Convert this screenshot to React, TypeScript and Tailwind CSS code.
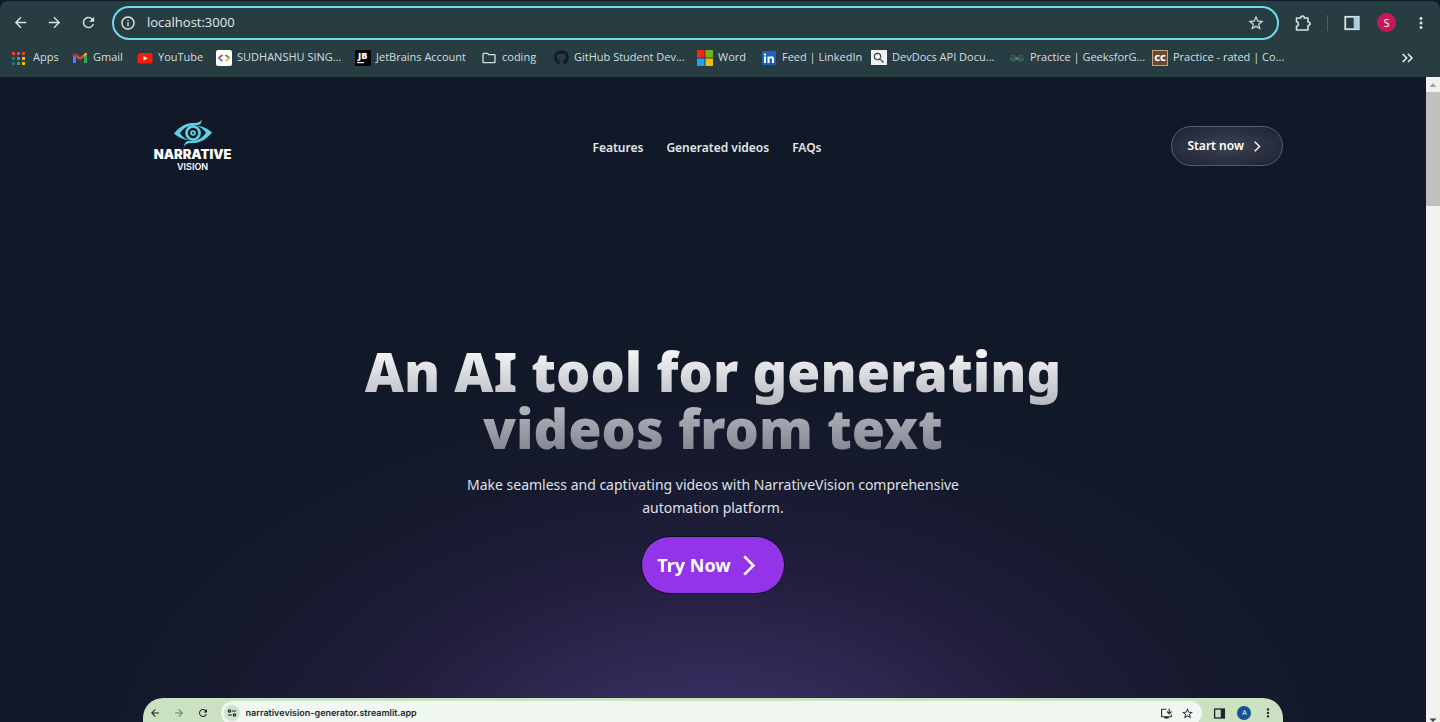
import type { ReactNode } from 'react';
import { FaGithub } from 'react-icons/fa';
import {
  MdArrowBack,
  MdArrowForward,
  MdInfoOutline,
  MdInstallDesktop,
  MdMoreVert,
  MdOutlineFolder,
  MdRefresh,
  MdSearch,
  MdStarBorder,
} from 'react-icons/md';

const AppsIcon = () => {
  const colors = ['#ea4335', '#ea4335', '#ea4335', '#34707a', '#4285f4', '#fbbc04', '#34707a', '#34a853', '#fbbc04'];
  return (
    <svg width="16" height="16" viewBox="0 0 16 16">
      {colors.map((c, i) => (
        <rect key={i} x={(i % 3) * 5} y={2 + Math.floor(i / 3) * 5} width="3" height="3" fill={c} />
      ))}
    </svg>
  );
};

const GmailIcon = () => (
  <svg width="16" height="16" viewBox="0 0 16 16">
    <path d="M1 13V4.500L4 7v6z" fill="#4285f4" />
    <path d="M12 13V7l3-2.500V13z" fill="#34a853" />
    <path d="M12 4l1.500-1C14.500 2.500 15 3.500 15 4.500L12 7z" fill="#fbbc04" />
    <path d="M4 4L2.500 3C1.500 2.500 1 3.500 1 4.500L4 7z" fill="#c5221f" />
    <path d="M4 4l4 3 4-3v3l-4 3-4-3z" fill="#ea4335" />
  </svg>
);

const YoutubeIcon = () => (
  <svg width="16" height="16" viewBox="0 0 16 16">
    <rect x="0.500" y="3" width="15" height="10.500" rx="2.500" fill="#f61c0d" />
    <path d="M6.500 6v4.500l4-2.250z" fill="#fff" />
  </svg>
);

const CodeIcon = () => (
  <svg width="16" height="16" viewBox="0 0 16 16">
    <rect width="16" height="16" rx="2" fill="#fff" />
    <g fill="none" strokeWidth="2">
      <path d="M6.500 5L2.500 8" stroke="#ea4335" />
      <path d="M2.500 8l4 3" stroke="#4285f4" />
      <path d="M9.500 5l4 3" stroke="#34a853" />
      <path d="M13.500 8l-4 3" stroke="#fbbc04" />
    </g>
  </svg>
);

const JetBrainsIcon = () => (
  <svg width="16" height="16" viewBox="0 0 16 16" className="overflow-visible">
    <rect width="16" height="16" fill="#05060c" />
    <text x="3" y="9" fontSize="9" fontWeight="800" fill="#fff">JB</text>
    <rect x="2" y="12" width="7" height="1.200" fill="#fff" />
  </svg>
);

const WindowsIcon = () => (
  <svg width="16" height="16" viewBox="0 0 16 16">
    <rect width="7.500" height="7.500" fill="#f8250f" />
    <rect x="8.500" width="7.500" height="7.500" fill="#72b51c" />
    <rect y="8.500" width="7.500" height="7.500" fill="#21a1f1" />
    <rect x="8.500" y="8.500" width="7.500" height="7.500" fill="#fab908" />
  </svg>
);

const LinkedinIcon = () => (
  <svg width="16" height="16" viewBox="0 0 16 16">
    <rect x="1" y="1" width="14" height="14" rx="1" fill="#1c62b8" />
    <path d="M3 6.500h2V13H3zM3 3.500h2v2H3zM6.500 6.500h2v1c1-1.700 4.500-1.700 4.500 1.500v4h-2V9.500c0-1.700-2.500-1.700-2.500 0V13h-2z" fill="#fff" />
  </svg>
);

const DevDocsIcon = () => (
  <span className="flex h-[15px] w-4 items-center justify-center bg-[#f1f1f1] text-[#3c4043]">
    <MdSearch size={14} />
  </span>
);

const GeeksIcon = () => (
  <svg width="16" height="16" viewBox="0 0 16 16" fill="none" stroke="#3f6560" strokeWidth="1.300">
    <path d="M2 6.200c2-1.200 5-.4 5 2.300 0 3-5.500 3-5.500 0h13c0 3-5.500 3-5.500 0 0-2.700 3-3.500 5-2.300" />
    <path d="M7 8.500h2" stroke="#4f9b2c" strokeWidth="2" />
  </svg>
);

const CodeChefIcon = () => (
  <span className="flex h-4 w-4 items-center justify-center border border-[#c9a27e] bg-[#6b4a35] text-[9px] leading-none font-extrabold text-white">
    CC
  </span>
);

const ExtensionIcon = () => (
  <svg width="18" height="18" viewBox="0 0 18 18" fill="none" stroke="currentColor" strokeWidth="1.600">
    <path d="M2.500 4h4.200c0-2.600 3.600-2.600 3.600 0h3.700v4c2.700.2 2.700 3.400 0 3.600V16H2.500v-3.700c2.600-.4 2.600-4.200 0-4.600z" strokeLinejoin="round" />
  </svg>
);

// icon, label and column width of every entry of the bookmarks bar
const bookmarks: { label: string; icon: ReactNode; width: string }[] = [
  { label: 'Apps', icon: <AppsIcon />, width: 'w-[60px]' },
  { label: 'Gmail', icon: <GmailIcon />, width: 'w-[65px]' },
  { label: 'YouTube', icon: <YoutubeIcon />, width: 'w-[79px]' },
  { label: 'SUDHANSHU SING...', icon: <CodeIcon />, width: 'w-[139px]' },
  { label: 'JetBrains Account', icon: <JetBrainsIcon />, width: 'w-[126px]' },
  { label: 'coding', icon: <MdOutlineFolder size={18} />, width: 'w-[72px]' },
  { label: 'GitHub Student Dev...', icon: <FaGithub size={15} color="#0f1a2a" />, width: 'w-[144px]' },
  { label: 'Word', icon: <WindowsIcon />, width: 'w-[64px]' },
  { label: 'Feed | LinkedIn', icon: <LinkedinIcon />, width: 'w-[110px]' },
  { label: 'DevDocs API Docu...', icon: <DevDocsIcon />, width: 'w-[138px]' },
  { label: 'Practice | GeeksforG...', icon: <GeeksIcon />, width: 'w-[143px]' },
  { label: 'Practice - rated | Co...', icon: <CodeChefIcon />, width: 'w-[140px]' },
];

const PanelIcon = ({ size, fill }: { size: number; fill: string }) => (
  <svg width={size} height={size} viewBox="0 0 16 16">
    <rect x="2" y="2.500" width="12" height="11" fill="none" stroke="currentColor" strokeWidth="1.600" />
    <rect x="9.500" y="2.500" width="4.500" height="11" fill={fill} />
  </svg>
);

const BrowserBar = () => (
  <header className="bg-[#0b1c28] font-['Open_Sans',sans-serif]">
    <div className="mt-px rounded-t-lg bg-[#283d42] text-[#d5e3e8]">
      <div className="flex h-[43px] items-center pr-[10px] pl-3">
        <button aria-label="Back" className="flex w-[34px]"><MdArrowBack size={17} /></button>
        <button aria-label="Forward" className="flex w-[34px]"><MdArrowForward size={17} /></button>
        <button aria-label="Reload" className="flex w-8"><MdRefresh size={17} /></button>
        <div className="flex h-[34px] flex-1 items-center gap-[11px] rounded-full border-2 border-[#70dbed] px-1.5">
          <MdInfoOutline size={16} className="text-[#e8eef0]" />
          <input
            aria-label="Address"
            defaultValue="localhost:3000"
            className="min-w-0 flex-1 bg-transparent text-[13px] text-[#e3e8ea] outline-none"
          />
          <button aria-label="Bookmark this page" className="pr-1.5"><MdStarBorder size={18} /></button>
        </div>
        <div className="flex items-center pl-[15px]">
          <button aria-label="Extensions"><ExtensionIcon /></button>
          <span className="mx-[15px] h-4 w-px bg-[#466069]" />
          <button aria-label="Side panel"><PanelIcon size={18} fill="#a8cfdc" /></button>
          <button aria-label="Profile" className="ml-4 h-[19px] w-[19px] rounded-full bg-[#c41a56] text-[11px] leading-none text-white">
            S
          </button>
          <button aria-label="Menu" className="ml-4"><MdMoreVert size={18} /></button>
        </div>
      </div>
      <nav className="flex h-[33px] items-center pr-6 pb-1.5 pl-3 text-[11px] text-[#d3dde0]">
        {bookmarks.map((b) => (
          <a key={b.label} href="#" className={`flex shrink-0 items-center gap-[5px] whitespace-nowrap ${b.width}`}>
            <span className="flex w-4 shrink-0 justify-center">{b.icon}</span>
            {b.label}
          </a>
        ))}
        <button aria-label="More bookmarks" className="ml-auto">
          <svg width="16" height="16" viewBox="0 0 12 12" fill="none" stroke="#e3eef2" strokeWidth="1.200">
            <path d="M2 3l3 3-3 3M6 3l3 3-3 3" />
          </svg>
        </button>
      </nav>
    </div>
  </header>
);

const Logo = () => (
  <a href="#" className="flex w-[100px] flex-col items-center font-['Inter',sans-serif] text-white">
    <svg width="44" height="28" viewBox="0 0 44 30" fill="none">
      <g fill="#5fd0e0">
        <path d="M1.500 15.500C9 6.500 16 4 23 4.200c4 0 7-.7 8.500-4-.2 4-1.500 6-5.500 6.500-4-1-12 0-18 8.500 3 4 6 6 9.500 7.500C11 22 6 19.500 1.500 15.500z" />
        <path d="M42.500 14.500C35 23.500 28 26 21 25.800c-4 0-7 .7-8.500 4 .2-4 1.500-6 5.500-6.500 4 1 12 0 18-8.500-3-4-6-6-9.500-7.500C33 8 38 10.500 42.500 14.500z" />
      </g>
      <circle cx="22" cy="15" r="7" stroke="#5fd0e0" strokeWidth="3" />
      <circle cx="22" cy="15" r="3" fill="#5fd0e0" />
      <circle cx="22" cy="15" r="1" fill="#111827" />
    </svg>
    <span className="text-[13px] leading-[14px] font-black">NARRATIVE</span>
    <span className="text-[9px] leading-[12px] font-semibold">VISION</span>
  </a>
);

const Chevron = ({ size }: { size: number }) => (
  <svg width={size} height={size} viewBox="0 0 16 16" fill="none" stroke="currentColor" strokeWidth="2">
    <path d="M4 1l7 7-7 7" />
  </svg>
);

const Navbar = () => (
  <div className="flex items-center justify-between pt-[42px]">
    <Logo />
    <nav className="flex gap-[23px] pt-1 text-[12px] font-semibold text-[#e4e6ea]">
      <a href="#features">Features</a>
      <a href="#videos">Generated videos</a>
      <a href="#faqs">FAQs</a>
    </nav>
    <button className="flex h-10 w-28 items-center gap-2 rounded-full border border-[#585d6c] bg-[radial-gradient(ellipse_at_center,#3d4350,#1c2035)] pl-[15px] text-[12px] font-semibold text-white">
      Start now
      <Chevron size={11} />
    </button>
  </div>
);

const Hero = () => (
  <section className="flex flex-col items-center pt-[170px] text-center">
    <h1 className="bg-linear-to-b from-white to-[#7d808c] bg-clip-text text-[54px] leading-[57px] font-black text-transparent">
      An AI tool for generating
      <br />
      videos from text
    </h1>
    <p className="mt-4 max-w-[520px] text-[14px] leading-[23px] text-[#dfe1e5]">
      Make seamless and captivating videos with NarrativeVision comprehensive automation platform.
    </p>
    <button className="mt-[17px] flex h-[58px] items-center gap-2 rounded-full border border-[#0b0c1c] bg-[#9334e9] pr-6 pl-[15px] text-[18px] font-bold text-white">
      Try Now
      <Chevron size={21} />
    </button>
  </section>
);

const Preview = () => (
  <div className="mt-[104px] h-40 rounded-t-[20px] bg-[#cae1c2] text-[#1d2430]">
    <div className="flex items-center pt-[3px] pr-2 pl-[6px]">
      <button aria-label="Back" className="flex w-6"><MdArrowBack size={12} /></button>
      <button aria-label="Forward" className="flex w-6 text-[#71806f]"><MdArrowForward size={12} /></button>
      <button aria-label="Reload" className="flex w-6"><MdRefresh size={12} /></button>
      <div className="flex h-6 flex-1 items-center rounded-full bg-[#f0f8f1] pr-2 pl-[3px]">
        <span className="flex h-4 w-4 items-center justify-center rounded-full bg-[#cfe3cc]">
          <svg width="10" height="10" viewBox="0 0 10 10" fill="none" stroke="currentColor" strokeWidth="1.200">
            <circle cx="2.500" cy="3" r="1.200" />
            <path d="M5 3h4M1 7h4" />
            <circle cx="7.500" cy="7" r="1.200" />
          </svg>
        </span>
        <input
          aria-label="Preview address"
          defaultValue="narrativevision-generator.streamlit.app"
          className="min-w-0 flex-1 bg-transparent pl-1.5 font-['Inter',sans-serif] text-[9px] font-semibold outline-none"
        />
        <MdInstallDesktop size={13} className="mr-2" />
        <MdStarBorder size={13} />
      </div>
      <span className="ml-[11px]"><PanelIcon size={13} fill="currentColor" /></span>
      <span className="ml-[11px] flex h-3.5 w-3.5 items-center justify-center rounded-full bg-[#175394] text-[7px] text-white">A</span>
      <MdMoreVert size={14} className="ml-2.5" />
    </div>
  </div>
);

const ScrollBar = () => (
  <aside className="flex w-[14px] shrink-0 flex-col items-center bg-[#f1f1f1]">
    <svg width="14" height="15" viewBox="0 0 14 15"><path d="M3.500 10L7 6l3.500 4z" fill="#a3a3a3" /></svg>
    <div className="h-[114px] w-full bg-[#c1c1c1]" />
    <svg className="mt-auto" width="14" height="6" viewBox="0 0 14 6"><path d="M3.500 2.500h7L7 6z" fill="#404040" /></svg>
  </aside>
);

export default function App() {
  return (
    <div className="flex h-screen flex-col overflow-hidden bg-[#111827] font-['Noto_Sans',sans-serif]">
      <BrowserBar />
      <div className="flex min-h-0 flex-1">
        <main className="min-w-0 flex-1 overflow-hidden bg-[radial-gradient(ellipse_46%_62%_at_50%_108%,#463770_0%,#342a58_24%,#211e3c_52%,#171a2f_76%,#111827_100%)]">
          <div className="mx-auto w-4/5">
            <Navbar />
            <Hero />
            <Preview />
          </div>
        </main>
        <ScrollBar />
      </div>
    </div>
  );
}
